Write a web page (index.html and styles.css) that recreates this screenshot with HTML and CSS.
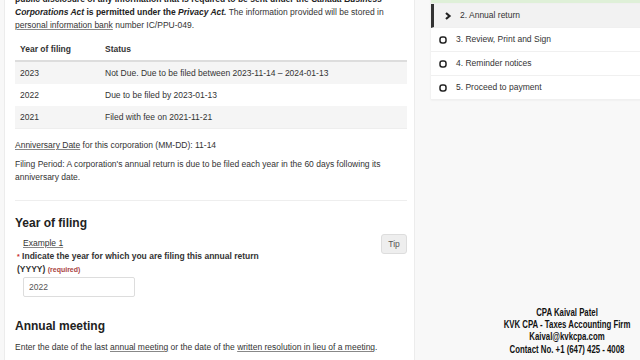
FILE: index.html
```html
<!DOCTYPE html>
<html lang="en">
  <head>
    <meta charset="UTF-8" />
    <title>Annual return - Year of filing</title>
    <link rel="stylesheet" href="styles.css">
  </head>
  <body>
    <div class="main">
      <p class="intro">
        <b>public disclosure of any information that is required to be sent under the <i>Canada Business
        Corporations Act</i> is permitted under the <i>Privacy Act.</i></b> The information provided will be stored in
        <a href="#">personal information bank</a> number IC/PPU-049.
      </p>

      <table class="filings">
        <thead>
          <tr><th class="col-year">Year of filing</th><th>Status</th></tr>
        </thead>
        <tbody>
          <tr><td>2023</td><td>Not Due. Due to be filed between 2023-11-14 – 2024-01-13</td></tr>
          <tr><td>2022</td><td>Due to be filed by 2023-01-13</td></tr>
          <tr><td>2021</td><td>Filed with fee on 2021-11-21</td></tr>
        </tbody>
      </table>

      <p class="anniv"><a href="#">Anniversary Date</a> for this corporation (MM-DD): 11-14</p>
      <p>Filing Period: A corporation's annual return is due to be filed each year in the 60 days following its anniversary date.</p>

      <hr>

      <h3>Year of filing</h3>
      <div class="field">
        <div class="field-main">
          <a href="#" class="example">Example 1</a>
          <label for="year"><span class="star">*</span> Indicate the year for which you are filing this annual return
            (YYYY) <span class="required">(required)</span></label>
          <input id="year" type="text" value="2022">
        </div>
        <button class="tip">Tip</button>
      </div>

      <h3 class="meeting">Annual meeting</h3>
      <p>Enter the date of the last <a href="#">annual meeting</a> or the date of the <a href="#">written resolution in lieu of a meeting</a>.</p>
    </div>

    <div class="side">
      <ul class="steps">
        <li class="done">1. Corporation information</li>
        <li class="current">
          <svg width="8" height="8" viewBox="0 0 8 8"><polyline points="2,1 5.5,4 2,7" fill="none" stroke="#222" stroke-width="2.2"/></svg>
          2. Annual return
        </li>
        <li>
          <svg width="8" height="8" viewBox="0 0 8 8"><rect x="1" y="1" width="6" height="6" rx="2.2" fill="none" stroke="#222" stroke-width="1.5"/></svg>
          3. Review, Print and Sign
        </li>
        <li>
          <svg width="8" height="8" viewBox="0 0 8 8"><rect x="1" y="1" width="6" height="6" rx="2.2" fill="none" stroke="#222" stroke-width="1.5"/></svg>
          4. Reminder notices
        </li>
        <li>
          <svg width="8" height="8" viewBox="0 0 8 8"><rect x="1" y="1" width="6" height="6" rx="2.2" fill="none" stroke="#222" stroke-width="1.5"/></svg>
          5. Proceed to payment
        </li>
      </ul>

      <div class="contact">
        CPA Kaival Patel<br>
        KVK CPA - Taxes Accounting Firm<br>
        Kaival@kvkcpa.com<br>
        Contact No. +1 (647) 425 - 4008
      </div>
    </div>
  </body>
</html>
```

FILE: styles.css
```css
body {
  margin: 0;
  font-family: "Liberation Sans", Arial, sans-serif;
  font-size: 8.5px;
  line-height: 13px;
  color: #333;
  background: #f8f8f8;
  display: flex;
  height: 360px;
  overflow: hidden;
}

a {
  color: #333;
  text-decoration: underline;
  text-decoration-color: #888;
}

.main {
  width: 392px;
  flex: none;
  margin-left: 4px;
  padding: 0 7px 0 10px;
  background: #fff;
  border-left: 1px solid #ececec;
  border-right: 1px solid #ececec;
}

.main p {
  margin: 0 0 6px;
}

.main .intro {
  margin-top: -7px;
}

.intro b {
  color: #222;
}

.filings {
  width: 100%;
  border-collapse: collapse;
  margin-top: 5px;
  border-bottom: 1px solid #eee;
}

.filings th,
.filings td {
  text-align: left;
  padding: 0 5px;
  height: 22px;
}

.filings th {
  border-bottom: 2px solid #ddd;
}

.filings .col-year {
  width: 75px;
}

.filings tbody tr:nth-child(odd) {
  background: #f5f5f5;
}

.main .anniv {
  margin-top: 10px;
}

hr {
  border: 0;
  border-top: 1px solid #eee;
  margin: 16px 0 16px;
}

h3 {
  font-size: 12px;
  font-weight: bold;
  color: #222;
  margin: 0 0 7px;
}

.field {
  display: flex;
  justify-content: space-between;
  align-items: flex-start;
}

.field-main {
  display: flex;
  flex-direction: column;
  align-items: flex-start;
}

.example {
  margin-left: 8px;
}

label {
  font-weight: bold;
  width: 262px;
  margin-left: 2px;
}

.star {
  color: #c9302c;
  font-size: 7px;
}

.required {
  color: #a94442;
  font-size: 7px;
}

input {
  margin: 1px 0 0 8px;
  width: 100px;
  height: 18px;
  padding: 0 5px;
  border: 1px solid #ddd;
  border-radius: 2px;
  font-family: inherit;
  font-size: 8.5px;
  color: #555;
}

.tip {
  margin-top: -3px;
  width: 26px;
  height: 20px;
  padding: 0;
  background: #eee;
  border: 1px solid #ddd;
  border-radius: 3px;
  font-family: inherit;
  font-size: 8.5px;
  color: #555;
}

h3.meeting {
  margin-top: 23px;
  margin-bottom: 8px;
}

.side {
  flex: 1;
  padding: 0 12px 0 16px;
  display: flex;
  flex-direction: column;
}

.steps {
  list-style: none;
  margin: -20px 0 0;
  padding: 0;
  background: #fff;
  box-shadow: 0 0 2px rgba(0, 0, 0, 0.08);
}

.steps li {
  height: 23px;
  display: flex;
  align-items: center;
  gap: 9px;
  padding-left: 8px;
  border-bottom: 1px solid #f0f0f0;
}

.steps li.done {
  background: #dff0d8;
  color: #dff0d8;
}

.steps li.current {
  background: #f2f2f2;
  border-left: 3px solid #333;
  padding-left: 10px;
  gap: 8px;
}

.contact {
  margin-top: auto;
  margin-bottom: 5px;
  margin-left: 46px;
  width: 180px;
  flex: none;
  white-space: nowrap;
  text-align: center;
  font-weight: bold;
  font-size: 11px;
  line-height: 12.3px;
  color: #111;
  transform: scaleX(0.71);
}
```
